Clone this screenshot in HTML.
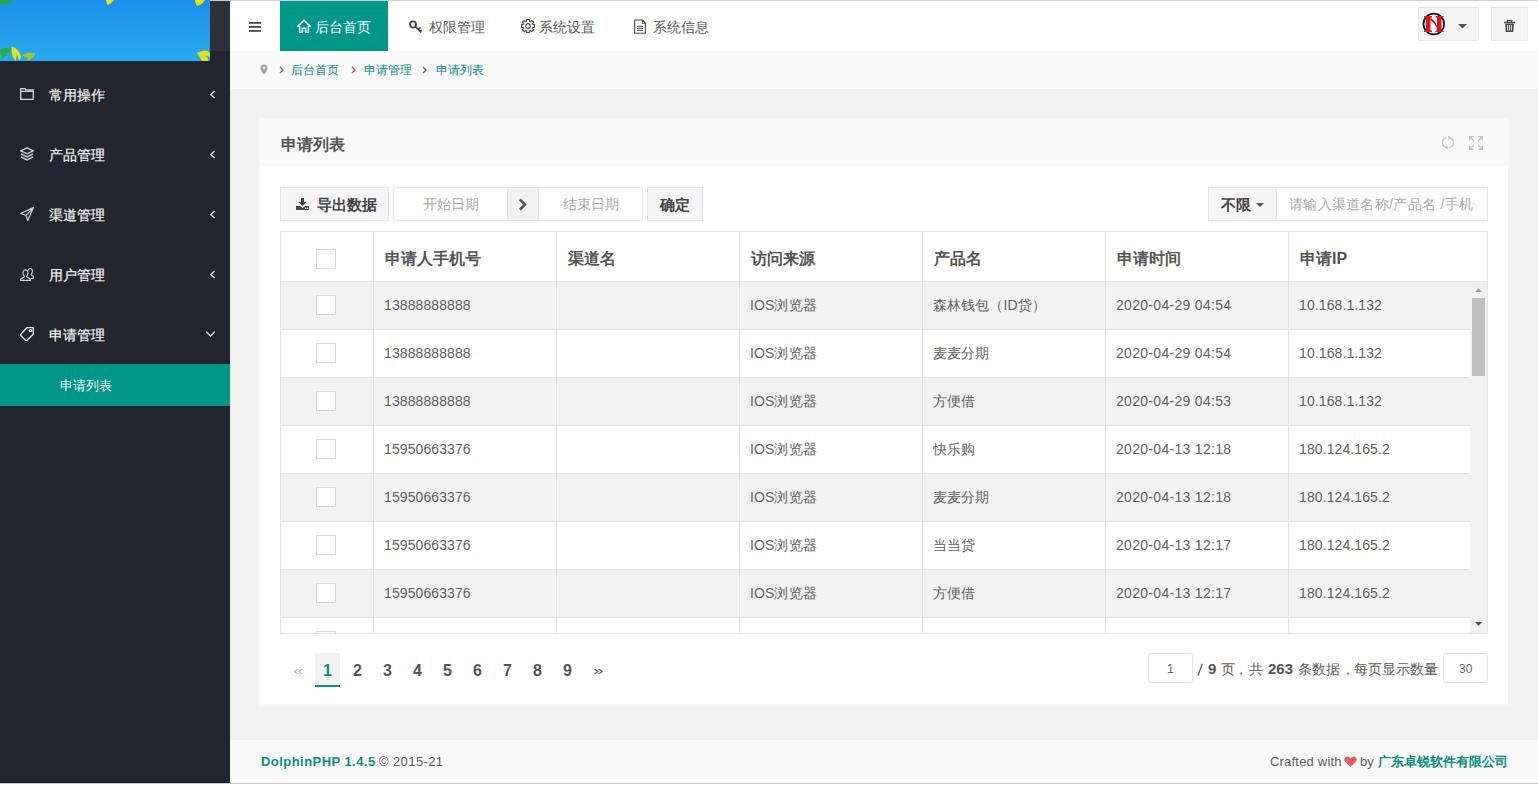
<!DOCTYPE html>
<html><head><meta charset="utf-8">
<style>
*{box-sizing:border-box;margin:0;padding:0}
html,body{width:1538px;height:787px;overflow:hidden;background:#fff;font-family:"Liberation Sans",sans-serif;color:#5c5c5c}
.a{position:absolute}
.t{position:absolute;white-space:nowrap;line-height:1}
.mi{color:#f4f4f4;font-size:14px;-webkit-text-stroke:0.2px #f4f4f4}
.nav{font-size:14px;color:#5a5a5a}
.btn{position:absolute;background:#f5f5f5;border:1px solid #e6e6e6}
.inp{position:absolute;background:#fff;border:1px solid #e6e6e6}
.cell{position:absolute;font-size:14px;color:#616161;line-height:1;white-space:nowrap;letter-spacing:0.1px}
.th{position:absolute;font-size:16px;font-weight:bold;color:#555;line-height:1;white-space:nowrap}
</style></head><body>

<div class="a" style="left:0;top:0;width:230px;height:783px;background:#22252d"></div>
<div class="a" style="left:210px;top:0;width:1328px;height:1px;background:#cfcfcf"></div>
<div class="a" style="left:210px;top:1px;width:20px;height:50px;background:#2e313a"></div>
<div class="a" style="left:230px;top:1px;width:1308px;height:50px;background:#fff"></div>
<div class="a" style="left:230px;top:51px;width:1308px;height:38px;background:#f9f9f9"></div>
<div class="a" style="left:230px;top:89px;width:1308px;height:651px;background:#f0f0f0"></div>
<div class="a" style="left:230px;top:740px;width:1308px;height:43px;background:#f9f9f9"></div>
<div class="a" style="left:0;top:783px;width:1538px;height:1px;background:#c8c8c8"></div>
<svg class="a" style="left:0;top:0" width="210" height="61" viewBox="0 0 210 61">
<defs><linearGradient id="lg" x1="0" y1="0" x2="0" y2="1"><stop offset="0" stop-color="#1a91ea"/><stop offset="1" stop-color="#29aaee"/></linearGradient></defs>
<rect width="210" height="61" fill="url(#lg)"/>
<path d="M0 0 H13 Q10 4 3 4 L0 4 Z" fill="#28a838"/>
<circle cx="73" cy="0.5" r="1" fill="#1aa58a"/>
<path d="M0.5 50 Q6 46.5 11.5 48.5 Q10 53 5.5 53.5 Q8.5 55 3 58.5 Q0 55.5 0.5 50 Z" fill="#2aae3a"/>
<path d="M11.5 46.5 Q19.5 49 21 57 Q20.5 59.5 19 60.5 Q17.5 56 16.5 53.5 Q16.8 57.5 15.8 61 Q11 56 11.5 46.5 Z" fill="#e8e414"/>
<path d="M22.5 55 Q29 51.5 35.5 53.5 Q33.5 59.5 26 61 L28.5 57.5 Q25 58.5 22.5 55 Z" fill="#a0c62a"/>
<path d="M106 0 H114 Q111 4 108 5 Q106 3 106 0 Z" fill="#e6e312"/>
<path d="M195 0 H205 Q202 5 197 6 Q195 3 195 0 Z" fill="#e6e312"/>
<path d="M197 53 Q206 48 210 53 V57 Q206 55 205 56 Q209 58 208 61 H202 Q200 57 197 53 Z" fill="#e6e312"/>
</svg>
<div class="t mi" style="left:49px;top:88px">常用操作</div>
<svg class="a" style="left:20px;top:88px" width="14" height="12" viewBox="0 0 14 12"><path d="M0.7 0.7 H5 L5.8 1.8 H13.3 V11.3 H0.7 Z M0.7 3.3 H13.3" fill="none" stroke="#d4d4d8" stroke-width="1.3"/></svg>
<svg class="a" style="left:209px;top:90px" width="7" height="9" viewBox="0 0 7 9"><path d="M5.6 1 L1.8 4.5 L5.6 8" fill="none" stroke="#dcdcdc" stroke-width="1.4"/></svg>
<div class="t mi" style="left:49px;top:148px">产品管理</div>
<svg class="a" style="left:20px;top:147px" width="14" height="14" viewBox="0 0 14 14"><path d="M7 0.8 L13.2 3.8 L7 6.8 L0.8 3.8 Z" fill="none" stroke="#d4d4d8" stroke-width="1.3"/><path d="M1 6.8 L7 9.8 L13 6.8 M1 9.8 L7 12.8 L13 9.8" fill="none" stroke="#d4d4d8" stroke-width="1.5"/></svg>
<svg class="a" style="left:209px;top:150px" width="7" height="9" viewBox="0 0 7 9"><path d="M5.6 1 L1.8 4.5 L5.6 8" fill="none" stroke="#dcdcdc" stroke-width="1.4"/></svg>
<div class="t mi" style="left:49px;top:208px">渠道管理</div>
<svg class="a" style="left:20px;top:207px" width="14" height="14" viewBox="0 0 14 14"><path d="M13.4 0.6 L0.6 6.5 L6 8.3 L7.8 13.6 Z M6 8.3 L13.4 0.6" fill="none" stroke="#d4d4d8" stroke-width="1.2" stroke-linejoin="round"/></svg>
<svg class="a" style="left:209px;top:210px" width="7" height="9" viewBox="0 0 7 9"><path d="M5.6 1 L1.8 4.5 L5.6 8" fill="none" stroke="#dcdcdc" stroke-width="1.4"/></svg>
<div class="t mi" style="left:49px;top:268px">用户管理</div>
<svg class="a" style="left:20px;top:267px" width="14" height="14" viewBox="0 0 14 14"><path d="M7.5 5 C7.5 2.5 10 1 11.3 1.8 C13 2.8 12.5 5.8 11.2 7.2 C11 8 11.5 8.5 13.2 9.2 V11.5 H10.5" fill="none" stroke="#d4d4d8" stroke-width="1.1"/><path d="M5.5 2.8 C3.3 2.8 2.8 5 3.2 6.8 C3.5 8 4.3 8.8 4.3 9.8 C4.3 10.8 0.7 11 0.7 12.2 V13.3 H10.3 V12.2 C10.3 11 6.7 10.8 6.7 9.8 C6.7 8.8 7.5 8 7.8 6.8 C8.2 5 7.7 2.8 5.5 2.8 Z" fill="none" stroke="#d4d4d8" stroke-width="1.2"/></svg>
<svg class="a" style="left:209px;top:270px" width="7" height="9" viewBox="0 0 7 9"><path d="M5.6 1 L1.8 4.5 L5.6 8" fill="none" stroke="#dcdcdc" stroke-width="1.4"/></svg>
<div class="t mi" style="left:49px;top:328px">申请管理</div>
<svg class="a" style="left:20px;top:327px" width="14" height="14" viewBox="0 0 14 14"><path d="M6.8 0.7 H13.3 V7.2 L6.2 14 L0.2 8 Z" fill="none" stroke="#f0f0f0" stroke-width="1.3" stroke-linejoin="round"/><circle cx="10.5" cy="3.6" r="1.2" fill="none" stroke="#f0f0f0" stroke-width="1.1"/></svg>
<svg class="a" style="left:205px;top:330px" width="11" height="8" viewBox="0 0 11 8"><path d="M1.3 1.8 L5.5 6 L9.7 1.8" fill="none" stroke="#dcdcdc" stroke-width="1.3"/></svg>
<div class="a" style="left:0;top:364px;width:230px;height:42px;background:#009688"></div>
<div class="t" style="left:60px;top:379px;font-size:13px;color:#f4f4f4">申请列表</div>
<svg class="a" style="left:249px;top:22px" width="12" height="10" viewBox="0 0 12 10"><rect y="0" width="12" height="1.8" fill="#4a4a4a"/><rect y="4" width="12" height="1.8" fill="#4a4a4a"/><rect y="8" width="12" height="1.8" fill="#4a4a4a"/></svg>
<div class="a" style="left:280px;top:1px;width:108px;height:50px;background:#009688"></div>
<svg class="a" style="left:297px;top:19px" width="14" height="14" viewBox="0 0 14 14"><path d="M1 7.2 L7 1.2 L13 7.2" fill="none" stroke="#f4ffff" stroke-width="1.7" stroke-linecap="round"/><path d="M2.6 6 V13.6 H5.4 V9.3 H8.6 V13.6 H11.4 V6" fill="none" stroke="#f4ffff" stroke-width="1.5"/></svg>
<div class="t nav" style="left:315px;top:20px;color:#fff">后台首页</div>
<svg class="a" style="left:409px;top:20px" width="14" height="13" viewBox="0 0 14 13"><ellipse cx="4" cy="4.5" rx="3" ry="3.1" fill="none" stroke="#4a4a4a" stroke-width="1.9"/><path d="M6.2 6.6 L12.3 12.4 M9.2 9.5 L11.6 7.4 M11.2 11.2 L12.8 9.8" fill="none" stroke="#4a4a4a" stroke-width="1.6"/></svg>
<div class="t nav" style="left:429px;top:20px">权限管理</div>
<svg class="a" style="left:521px;top:19px" width="14" height="14" viewBox="0 0 14 14"><path d="M5.52 2.22 L5.65 0.34 L8.35 0.34 L8.48 2.22 L9.33 2.58 L10.76 1.33 L12.67 3.24 L11.42 4.67 L11.78 5.52 L13.66 5.65 L13.66 8.35 L11.78 8.48 L11.42 9.33 L12.67 10.76 L10.76 12.67 L9.33 11.42 L8.48 11.78 L8.35 13.66 L5.65 13.66 L5.52 11.78 L4.67 11.42 L3.24 12.67 L1.33 10.76 L2.58 9.33 L2.22 8.48 L0.34 8.35 L0.34 5.65 L2.22 5.52 L2.58 4.67 L1.33 3.24 L3.24 1.33 L4.67 2.58 Z" fill="none" stroke="#4a4a4a" stroke-width="1.2" stroke-linejoin="round"/><circle cx="7" cy="7" r="2.3" fill="none" stroke="#4a4a4a" stroke-width="1.2"/></svg>
<div class="t nav" style="left:539px;top:20px">系统设置</div>
<svg class="a" style="left:634px;top:19px" width="12" height="15" viewBox="0 0 12 15"><path d="M0.6 1 H8.5 L11.4 4 V14.2 H0.6 Z M8.5 1 V4.3 H11.4" fill="none" stroke="#4a4a4a" stroke-width="1.1"/><path d="M3 7.4 H9 M3 9.4 H9 M3 11.4 H9" stroke="#4a4a4a" stroke-width="1"/></svg>
<div class="t nav" style="left:653px;top:20px">系统信息</div>
<div class="btn" style="left:1418px;top:7px;width:61px;height:34px;border-color:#e9e9e9"></div>
<svg class="a" style="left:1422px;top:12px" width="24" height="24" viewBox="0 0 24 24">
<circle cx="11.8" cy="12" r="10.3" fill="#fff" stroke="#1a1a1a" stroke-width="1.8"/>
<path d="M2 4 H10 V5.6 H8.4 V18.4 H10 V20 H2 V18.4 H4 V5.6 H2 Z" fill="#d8141c"/>
<path d="M13.5 4 H21.5 V5.6 H19.5 V18.4 H21.5 V20 H13.5 V18.4 H15 V5.6 H13.5 Z" fill="#d8141c"/>
<path d="M8.4 5.6 Q12.5 8.5 15 13.5 V16 Q12.5 10.5 8.4 8.5 Z" fill="#d8141c"/>
<path d="M9 6.6 Q12.5 9 14.4 14.5" fill="none" stroke="#8a0c12" stroke-width="0.7"/>
</svg>
<svg class="a" style="left:1458px;top:24px" width="9" height="5" viewBox="0 0 9 5"><path d="M0 0 H9 L4.5 4.5 Z" fill="#505050"/></svg>
<div class="btn" style="left:1491px;top:7px;width:37px;height:34px;border-color:#e9e9e9"></div>
<svg class="a" style="left:1504px;top:20px" width="11" height="12" viewBox="0 0 11 12"><path d="M0 1.8 H11 V3.2 H0 Z" fill="#4a4a4a"/><path d="M3.3 2 V0.6 H7.7 V2" fill="none" stroke="#4a4a4a" stroke-width="1.1"/><path d="M1.2 3.5 H9.8 L9.3 12 H1.7 Z" fill="#4a4a4a"/><path d="M3.6 5 V10.5 M5.5 5 V10.5 M7.4 5 V10.5" stroke="#f5f5f5" stroke-width="0.9"/></svg>
<svg class="a" style="left:260px;top:64px" width="8" height="11" viewBox="0 0 8 11"><path d="M4 0.5 C1.8 0.5 0.5 2 0.5 4 C0.5 6 4 10.8 4 10.8 C4 10.8 7.5 6 7.5 4 C7.5 2 6.2 0.5 4 0.5 Z" fill="#9a9a9a"/><circle cx="4" cy="3.9" r="1.3" fill="#f9f9f9"/></svg>
<svg class="a" style="left:279px;top:66px" width="5" height="8" viewBox="0 0 5 8"><path d="M1 1 L4 4 L1 7" fill="none" stroke="#666" stroke-width="1.3"/></svg>
<svg class="a" style="left:351px;top:66px" width="5" height="8" viewBox="0 0 5 8"><path d="M1 1 L4 4 L1 7" fill="none" stroke="#666" stroke-width="1.3"/></svg>
<svg class="a" style="left:422px;top:66px" width="5" height="8" viewBox="0 0 5 8"><path d="M1 1 L4 4 L1 7" fill="none" stroke="#666" stroke-width="1.3"/></svg>
<div class="t" style="left:291px;top:64px;font-size:12px;color:#088e82">后台首页</div>
<div class="t" style="left:364px;top:64px;font-size:12px;color:#088e82">申请管理</div>
<div class="t" style="left:436px;top:64px;font-size:12px;color:#088e82">申请列表</div>
<div class="a" style="left:258px;top:117px;width:1253px;height:590px;background:#f4f4f4"></div>
<div class="a" style="left:260px;top:119px;width:1248px;height:585px;background:#fff"></div>
<div class="a" style="left:260px;top:119px;width:1248px;height:47px;background:#f9f9f9"></div>
<div class="t" style="left:281px;top:137px;font-size:16px;font-weight:bold;color:#555">申请列表</div>
<svg class="a" style="left:1441px;top:135px" width="14" height="15" viewBox="0 0 14 15"><path d="M5.6 2.6 A5 5 0 0 0 5.6 12.4" fill="none" stroke="#c4c4c4" stroke-width="1.3"/><path d="M8.4 2.6 A5 5 0 0 1 8.4 12.4" fill="none" stroke="#c4c4c4" stroke-width="1.3"/><path d="M7.2 0.8 L10.2 2.4 L7.6 4.8 Z" fill="#c4c4c4"/><path d="M6.8 14.2 L3.8 12.6 L6.4 10.2 Z" fill="#c4c4c4"/></svg>
<svg class="a" style="left:1469px;top:136px" width="14" height="14" viewBox="0 0 14 14"><path d="M0.7 4.5 V0.7 H4.5 M9.5 0.7 H13.3 V4.5 M13.3 9.5 V13.3 H9.5 M4.5 13.3 H0.7 V9.5 M1 1 L5 5 M13 1 L9 5 M13 13 L9 9 M1 13 L5 9" fill="none" stroke="#c2c2c2" stroke-width="1.3"/></svg>
<div class="btn" style="left:280px;top:187px;width:109px;height:34px"></div>
<svg class="a" style="left:296px;top:197px" width="13" height="13" viewBox="0 0 13 13"><path d="M5 1 H8 V5 H10.5 L6.5 9 L2.5 5 H5 Z" fill="#444"/><path d="M0 9 H4 L6.5 11.2 L9 9 H13 V13 H0 Z" fill="#444"/><circle cx="9.6" cy="11.2" r="0.8" fill="#f5f5f5"/><circle cx="11.6" cy="11.2" r="0.8" fill="#f5f5f5"/></svg>
<div class="t" style="left:317px;top:197px;font-size:15px;font-weight:bold;color:#444">导出数据</div>
<div class="inp" style="left:393px;top:187px;width:250px;height:34px;border-radius:3px"></div>
<div class="a" style="left:507px;top:188px;width:32px;height:32px;background:#f2f2f2;border-left:1px solid #e6e6e6;border-right:1px solid #e6e6e6"></div>
<svg class="a" style="left:518px;top:198px" width="9" height="13" viewBox="0 0 9 13"><path d="M1.9 1.3 L6.9 6.5 L1.9 11.7" fill="none" stroke="#555" stroke-width="2.6"/></svg>
<div class="t" style="left:423px;top:197px;font-size:14px;color:#a9a9a9">开始日期</div>
<div class="t" style="left:563px;top:197px;font-size:14px;color:#a9a9a9">结束日期</div>
<div class="btn" style="left:647px;top:187px;width:56px;height:34px"></div>
<div class="t" style="left:660px;top:197px;font-size:15px;font-weight:bold;color:#444">确定</div>
<div class="btn" style="left:1208px;top:187px;width:69px;height:34px"></div>
<div class="t" style="left:1221px;top:197px;font-size:15px;font-weight:bold;color:#444">不限</div>
<svg class="a" style="left:1256px;top:203px" width="8" height="4" viewBox="0 0 8 4"><path d="M0 0 H8 L4 4 Z" fill="#555"/></svg>
<div class="inp" style="left:1276px;top:187px;width:212px;height:34px"></div>
<div class="a" style="left:1277px;top:188px;width:197px;height:32px;overflow:hidden"><div class="t" style="left:12px;top:9px;font-size:14px;color:#a9a9a9;letter-spacing:0.3px">请输入渠道名称/产品名 /手机号</div></div>
<div class="a" style="left:280px;top:231px;width:1208px;height:403px;background:#fff;border:1px solid #e4e4e4"></div>
<div class="a" style="left:281px;top:281px;width:1206px;height:1px;background:#e4e4e4"></div>
<div class="a" style="left:281px;top:282px;width:1206px;height:351px;overflow:hidden">
<div class="a" style="left:0;top:0px;width:1189px;height:47px;background:#f2f2f2"></div>
<div class="a" style="left:0;top:47px;width:1189px;height:1px;background:#e4e4e4"></div>
<div class="a" style="left:35px;top:13px;width:20px;height:20px;background:#fff;border:1px solid #d9d9d9"></div>
<div class="cell" style="left:103px;top:16px;">13888888888</div>
<div class="cell" style="left:469px;top:16px;">IOS浏览器</div>
<div class="cell" style="left:652px;top:16px;">森林钱包（ID贷）</div>
<div class="cell" style="left:835px;top:16px;letter-spacing:0.3px;">2020-04-29 04:54</div>
<div class="cell" style="left:1018px;top:16px;">10.168.1.132</div>
<div class="a" style="left:0;top:48px;width:1189px;height:47px;background:#fff"></div>
<div class="a" style="left:0;top:95px;width:1189px;height:1px;background:#e4e4e4"></div>
<div class="a" style="left:35px;top:61px;width:20px;height:20px;background:#fff;border:1px solid #d9d9d9"></div>
<div class="cell" style="left:103px;top:64px;">13888888888</div>
<div class="cell" style="left:469px;top:64px;">IOS浏览器</div>
<div class="cell" style="left:652px;top:64px;">麦麦分期</div>
<div class="cell" style="left:835px;top:64px;letter-spacing:0.3px;">2020-04-29 04:54</div>
<div class="cell" style="left:1018px;top:64px;">10.168.1.132</div>
<div class="a" style="left:0;top:96px;width:1189px;height:47px;background:#f2f2f2"></div>
<div class="a" style="left:0;top:143px;width:1189px;height:1px;background:#e4e4e4"></div>
<div class="a" style="left:35px;top:109px;width:20px;height:20px;background:#fff;border:1px solid #d9d9d9"></div>
<div class="cell" style="left:103px;top:112px;">13888888888</div>
<div class="cell" style="left:469px;top:112px;">IOS浏览器</div>
<div class="cell" style="left:652px;top:112px;">方便借</div>
<div class="cell" style="left:835px;top:112px;letter-spacing:0.3px;">2020-04-29 04:53</div>
<div class="cell" style="left:1018px;top:112px;">10.168.1.132</div>
<div class="a" style="left:0;top:144px;width:1189px;height:47px;background:#fff"></div>
<div class="a" style="left:0;top:191px;width:1189px;height:1px;background:#e4e4e4"></div>
<div class="a" style="left:35px;top:157px;width:20px;height:20px;background:#fff;border:1px solid #d9d9d9"></div>
<div class="cell" style="left:103px;top:160px;">15950663376</div>
<div class="cell" style="left:469px;top:160px;">IOS浏览器</div>
<div class="cell" style="left:652px;top:160px;">快乐购</div>
<div class="cell" style="left:835px;top:160px;letter-spacing:0.3px;">2020-04-13 12:18</div>
<div class="cell" style="left:1018px;top:160px;">180.124.165.2</div>
<div class="a" style="left:0;top:192px;width:1189px;height:47px;background:#f2f2f2"></div>
<div class="a" style="left:0;top:239px;width:1189px;height:1px;background:#e4e4e4"></div>
<div class="a" style="left:35px;top:205px;width:20px;height:20px;background:#fff;border:1px solid #d9d9d9"></div>
<div class="cell" style="left:103px;top:208px;">15950663376</div>
<div class="cell" style="left:469px;top:208px;">IOS浏览器</div>
<div class="cell" style="left:652px;top:208px;">麦麦分期</div>
<div class="cell" style="left:835px;top:208px;letter-spacing:0.3px;">2020-04-13 12:18</div>
<div class="cell" style="left:1018px;top:208px;">180.124.165.2</div>
<div class="a" style="left:0;top:240px;width:1189px;height:47px;background:#fff"></div>
<div class="a" style="left:0;top:287px;width:1189px;height:1px;background:#e4e4e4"></div>
<div class="a" style="left:35px;top:253px;width:20px;height:20px;background:#fff;border:1px solid #d9d9d9"></div>
<div class="cell" style="left:103px;top:256px;">15950663376</div>
<div class="cell" style="left:469px;top:256px;">IOS浏览器</div>
<div class="cell" style="left:652px;top:256px;">当当贷</div>
<div class="cell" style="left:835px;top:256px;letter-spacing:0.3px;">2020-04-13 12:17</div>
<div class="cell" style="left:1018px;top:256px;">180.124.165.2</div>
<div class="a" style="left:0;top:288px;width:1189px;height:47px;background:#f2f2f2"></div>
<div class="a" style="left:0;top:335px;width:1189px;height:1px;background:#e4e4e4"></div>
<div class="a" style="left:35px;top:301px;width:20px;height:20px;background:#fff;border:1px solid #d9d9d9"></div>
<div class="cell" style="left:103px;top:304px;">15950663376</div>
<div class="cell" style="left:469px;top:304px;">IOS浏览器</div>
<div class="cell" style="left:652px;top:304px;">方便借</div>
<div class="cell" style="left:835px;top:304px;letter-spacing:0.3px;">2020-04-13 12:17</div>
<div class="cell" style="left:1018px;top:304px;">180.124.165.2</div>
<div class="a" style="left:0;top:336px;width:1189px;height:47px;background:#fff"></div>
<div class="a" style="left:0;top:383px;width:1189px;height:1px;background:#e4e4e4"></div>
<div class="a" style="left:35px;top:349px;width:20px;height:20px;background:#fff;border:1px solid #d9d9d9"></div>
<div class="cell" style="left:103px;top:352px;">15950663376</div>
<div class="cell" style="left:469px;top:352px;">IOS浏览器</div>
<div class="cell" style="left:652px;top:352px;">麦麦分期</div>
<div class="cell" style="left:835px;top:352px;letter-spacing:0.3px;">2020-04-13 12:17</div>
<div class="cell" style="left:1018px;top:352px;">180.124.165.2</div>
<div class="a" style="left:92px;top:0;width:1px;height:351px;background:#e4e4e4"></div>
<div class="a" style="left:275px;top:0;width:1px;height:351px;background:#e4e4e4"></div>
<div class="a" style="left:458px;top:0;width:1px;height:351px;background:#e4e4e4"></div>
<div class="a" style="left:641px;top:0;width:1px;height:351px;background:#e4e4e4"></div>
<div class="a" style="left:824px;top:0;width:1px;height:351px;background:#e4e4e4"></div>
<div class="a" style="left:1007px;top:0;width:1px;height:351px;background:#e4e4e4"></div>
<div class="a" style="left:1189px;top:0;width:17px;height:351px;background:#f1f1f1"></div>
<div class="a" style="left:1191px;top:16px;width:13px;height:78px;background:#c1c1c1"></div>
<svg class="a" style="left:1194px;top:6px" width="7" height="4" viewBox="0 0 7 4"><path d="M0 4 H7 L3.5 0 Z" fill="#a3a3a3"/></svg>
<svg class="a" style="left:1194px;top:340px" width="7" height="4" viewBox="0 0 7 4"><path d="M0 0 H7 L3.5 4 Z" fill="#505050"/></svg>
</div>
<div class="a" style="left:316px;top:249px;width:20px;height:20px;background:#fff;border:1px solid #d9d9d9"></div>
<div class="th" style="left:385px;top:251px">申请人手机号</div>
<div class="th" style="left:568px;top:251px">渠道名</div>
<div class="th" style="left:751px;top:251px">访问来源</div>
<div class="th" style="left:934px;top:251px">产品名</div>
<div class="th" style="left:1117px;top:251px">申请时间</div>
<div class="th" style="left:1300px;top:251px">申请IP</div>
<div class="a" style="left:373px;top:232px;width:1px;height:49px;background:#e4e4e4"></div>
<div class="a" style="left:556px;top:232px;width:1px;height:49px;background:#e4e4e4"></div>
<div class="a" style="left:739px;top:232px;width:1px;height:49px;background:#e4e4e4"></div>
<div class="a" style="left:922px;top:232px;width:1px;height:49px;background:#e4e4e4"></div>
<div class="a" style="left:1105px;top:232px;width:1px;height:49px;background:#e4e4e4"></div>
<div class="a" style="left:1288px;top:232px;width:1px;height:49px;background:#e4e4e4"></div>
<div class="a" style="left:315px;top:653px;width:25px;height:34px;background:#f2f2f2"></div>
<div class="a" style="left:315px;top:685px;width:25px;height:2px;background:#088e82"></div>
<div class="t" style="left:293px;top:660px;font-size:19px;color:#bbb;transform:scaleY(0.7);transform-origin:0 60%">«</div>
<div class="t" style="left:323.0px;top:663px;font-size:16px;font-weight:bold;color:#088e82">1</div>
<div class="t" style="left:353.0px;top:663px;font-size:16px;font-weight:bold;color:#555">2</div>
<div class="t" style="left:383.0px;top:663px;font-size:16px;font-weight:bold;color:#555">3</div>
<div class="t" style="left:413.0px;top:663px;font-size:16px;font-weight:bold;color:#555">4</div>
<div class="t" style="left:443.0px;top:663px;font-size:16px;font-weight:bold;color:#555">5</div>
<div class="t" style="left:473.0px;top:663px;font-size:16px;font-weight:bold;color:#555">6</div>
<div class="t" style="left:503.0px;top:663px;font-size:16px;font-weight:bold;color:#555">7</div>
<div class="t" style="left:533.0px;top:663px;font-size:16px;font-weight:bold;color:#555">8</div>
<div class="t" style="left:563.0px;top:663px;font-size:16px;font-weight:bold;color:#555">9</div>
<div class="t" style="left:593px;top:660px;font-size:19px;color:#555;transform:scaleY(0.7);transform-origin:0 60%">»</div>
<div class="inp" style="left:1148px;top:653px;width:45px;height:30px;border-radius:3px"></div>
<div class="t" style="left:1167px;top:663px;font-size:12px;color:#666">1</div>
<svg class="a" style="left:1196px;top:662px" width="8" height="15" viewBox="0 0 8 15"><path d="M1.8 13.8 L6.4 1.8" stroke="#5c5c5c" stroke-width="1.3"/></svg>
<div class="t" style="left:1208px;top:661px;font-size:15px;font-weight:bold;color:#555">9</div>
<div class="t" style="left:1221px;top:662px;font-size:14px;color:#5c5c5c;">页</div>
<div class="t" style="left:1234px;top:662px;font-size:14px;color:#5c5c5c;">，</div>
<div class="t" style="left:1249px;top:662px;font-size:14px;color:#5c5c5c;">共</div>
<div class="t" style="left:1268px;top:661px;font-size:15px;font-weight:bold;color:#555">263</div>
<div class="t" style="left:1298px;top:662px;font-size:14px;color:#5c5c5c;">条数据</div>
<div class="t" style="left:1341px;top:662px;font-size:14px;color:#5c5c5c;">，</div>
<div class="t" style="left:1354px;top:662px;font-size:14px;color:#5c5c5c;">每页显示数量</div>
<div class="inp" style="left:1443px;top:653px;width:45px;height:30px;border-radius:3px"></div>
<div class="t" style="left:1459px;top:663px;font-size:12px;color:#666">30</div>
<div class="t" style="left:261px;top:755px;font-size:13px;font-weight:bold;color:#088e82;letter-spacing:0.45px">DolphinPHP 1.4.5</div>
<div class="t" style="left:379px;top:755px;font-size:13px;color:#5c5c5c;letter-spacing:0.4px">© 2015-21</div>
<div class="t" style="left:1270px;top:755px;font-size:13px;color:#5c5c5c;letter-spacing:0.2px">Crafted with</div>
<svg class="a" style="left:1344px;top:756px" width="13" height="11" viewBox="0 0 13 11"><path d="M6.5 11 L1.2 5.8 C-0.5 4 0.3 0.5 3.3 0.5 C4.7 0.5 5.9 1.5 6.5 2.6 C7.1 1.5 8.3 0.5 9.7 0.5 C12.7 0.5 13.5 4 11.8 5.8 Z" fill="#e85b63"/></svg>
<div class="t" style="left:1360px;top:755px;font-size:13px;color:#5c5c5c">by</div>
<div class="t" style="left:1378px;top:755px;font-size:13px;font-weight:bold;color:#088e82">广东卓锐软件有限公司</div>
</body></html>
